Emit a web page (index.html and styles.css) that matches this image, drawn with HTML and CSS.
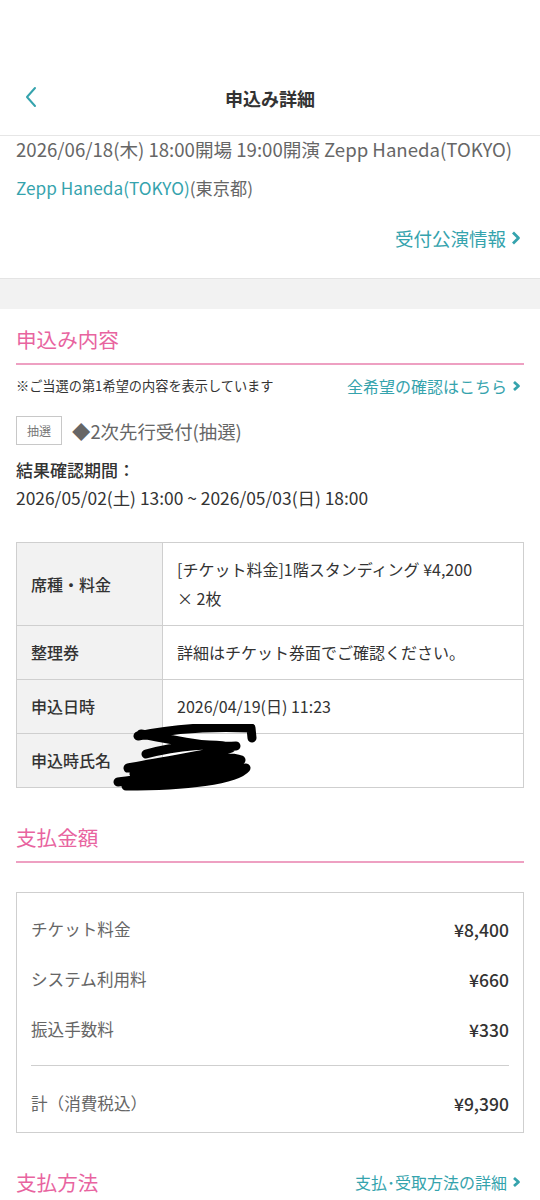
FILE: index.html
```html
<!DOCTYPE html>
<html lang="ja">
<head>
<meta charset="utf-8">
<title>申込み詳細</title>
<link rel="stylesheet" href="styles.css">
</head>
<body>
<div class="page">
  <header class="appbar">
    <span class="back">
      <svg width="14" height="22" viewBox="0 0 14 22"><path d="M11 2 L3 11 L11 20" fill="none" stroke="#35a3ad" stroke-width="2" stroke-linecap="round" stroke-linejoin="round"/></svg>
    </span>
    <h1 class="title">申込み詳細</h1>
  </header>

  <section class="event">
    <p class="event-date">2026/06/18(木) 18:00開場 19:00開演 Zepp Haneda(TOKYO)</p>
    <p class="venue"><span class="teal">Zepp Haneda(TOKYO)</span>(東京都)</p>
    <div class="link-row">
      <a class="link big">受付公演情報<svg class="chev" width="12" height="16" viewBox="0 0 12 16"><path d="M3 2.5 L8.5 8 L3 13.5" fill="none" stroke="#35a3ad" stroke-width="2.8" stroke-linejoin="round"/></svg></a>
    </div>
  </section>

  <div class="band"></div>

  <section class="content">
    <h2 class="sec-title">申込み内容</h2>
    <div class="note-row">
      <span class="note">※ご当選の第1希望の内容を表示しています</span>
      <a class="link small">全希望の確認はこちら<svg class="chev" width="11" height="14" viewBox="0 0 11 14"><path d="M3 3 L7.5 7 L3 11" fill="none" stroke="#35a3ad" stroke-width="2.8" stroke-linejoin="round"/></svg></a>
    </div>
    <div class="kind-row">
      <span class="badge">抽選</span>
      <span class="kind">◆2次先行受付(抽選)</span>
    </div>
    <p class="period-label">結果確認期間：</p>
    <p class="period">2026/05/02(土) 13:00 ~ 2026/05/03(日) 18:00</p>

    <div class="table-wrap">
      <table class="detail">
        <tr><th>席種・料金</th><td>[チケット料金]1階スタンディング ¥4,200<br>× 2枚</td></tr>
        <tr><th>整理券</th><td>詳細はチケット券面でご確認ください。</td></tr>
        <tr><th>申込日時</th><td>2026/04/19(日) 11:23</td></tr>
        <tr><th>申込時氏名</th><td></td></tr>
      </table>
      <svg class="scribble" width="160" height="70" viewBox="0 0 160 70">
        <path d="M35 10 C70 16 100 24 130 22 M32 12 C60 6 100 2 145 4 L146 14 M40 30 C70 22 110 18 125 24 C110 30 60 36 22 44 C60 38 120 30 135 36 C120 46 60 52 12 58 C50 54 110 50 140 44 C130 56 80 62 20 62 C60 58 100 56 118 50 M28 50 C60 42 100 38 120 40" fill="none" stroke="#000" stroke-width="9" stroke-linecap="round" stroke-linejoin="round"/>
      </svg>
    </div>

    <h2 class="sec-title gap">支払金額</h2>
    <div class="amount-box">
      <div class="amount-row"><span class="lbl">チケット料金</span><span class="val">¥8,400</span></div>
      <div class="amount-row"><span class="lbl">システム利用料</span><span class="val">¥660</span></div>
      <div class="amount-row"><span class="lbl">振込手数料</span><span class="val">¥330</span></div>
      <div class="divider"></div>
      <div class="amount-row"><span class="lbl">計（消費税込）</span><span class="val">¥9,390</span></div>
    </div>

    <div class="pay-head">
      <h2 class="pay-title">支払方法</h2>
      <a class="link small">支払･受取方法の詳細<svg class="chev" width="11" height="14" viewBox="0 0 11 14"><path d="M3 3 L7.5 7 L3 11" fill="none" stroke="#35a3ad" stroke-width="2.8" stroke-linejoin="round"/></svg></a>
    </div>
  </section>
</div>
</body>
</html>
```

FILE: styles.css
```css
* { box-sizing: border-box; }
html, body { margin: 0; padding: 0; background: #fff; }
body {
  font-family: "Noto Sans CJK JP", "Noto Sans", sans-serif;
  color: #333;
  width: 540px;
  height: 1200px;
  overflow: hidden;
}
p, h1, h2 { margin: 0; font-weight: normal; }
a { text-decoration: none; }

.appbar {
  margin-top: 60px;
  height: 76px;
  border-bottom: 1px solid #e6e6e6;
  display: flex;
  align-items: center;
  justify-content: center;
  position: relative;
}
.back { position: absolute; left: 24px; top: 26px; display: flex; }
.title { font-size: 18px; font-weight: bold; color: #333; line-height: 24px; }

.event { padding: 0 16px 27px; }
.event-date { font-size: 18.6px; line-height: 26px; color: #666; white-space: nowrap; }
.venue { margin-top: 14px; font-size: 17.2px; line-height: 24px; color: #666; }
.teal { color: #35a3ad; }
.link-row { margin-top: 25px; display: flex; justify-content: flex-end; padding-right: 2px; }
.link { color: #35a3ad; display: inline-flex; align-items: center; }
.link.big { font-size: 18.5px; line-height: 26px; }
.link.small { font-size: 16px; line-height: 20px; }
.chev { margin-left: 4px; }

.band { height: 31px; background: #f2f2f2; border-top: 1px solid #e4e4e4; }

.content { padding: 16px 16px 0; }
.sec-title {
  color: #e8649f;
  font-size: 20.6px;
  line-height: 28px;
  padding-bottom: 10px;
  border-bottom: 2px solid #eea0c2;
}
.sec-title.gap { margin-top: 35px; }

.note-row { margin-top: 11px; display: flex; justify-content: space-between; align-items: center; padding-right: 2px; }
.note { font-size: 13.2px; line-height: 20px; color: #333; }

.kind-row { margin-top: 20px; display: flex; align-items: center; }
.badge {
  width: 46px; height: 29px;
  border: 1px solid #c8c8c8;
  color: #777;
  font-size: 12px;
  display: flex; align-items: center; justify-content: center;
}
.kind { margin-left: 10px; font-size: 18.4px; line-height: 26px; color: #666; }

.period-label { margin-top: 11px; font-size: 17px; line-height: 28px; font-weight: 500; color: #333; }
.period { font-size: 17.4px; line-height: 28px; color: #333; }

.table-wrap { margin-top: 30px; position: relative; }
.detail { width: 100%; border-collapse: collapse; font-size: 16px; }
.detail th, .detail td { border: 1px solid #cfcfcf; padding: 12px 14px; line-height: 29px; text-align: left; vertical-align: middle; }
.detail th { width: 146px; background: #f2f2f2; font-weight: 500; color: #333; }
.detail td { color: #333; }
.scribble { position: absolute; left: 90px; top: 182px; }

.amount-box {
  margin-top: 29px;
  border: 1px solid #cfcfcf;
  padding: 11px 14px 4px;
}
.amount-row { height: 50px; display: flex; justify-content: space-between; align-items: center; }
.lbl { font-size: 16.6px; color: #666; }
.val { font-size: 17.5px; font-weight: 500; color: #333; }
.divider { margin: 11px 0 12px; border-top: 1px solid #cfcfcf; }

.pay-head { margin-top: 35px; display: flex; justify-content: space-between; align-items: center; padding-right: 2px; }
.pay-title { color: #e8649f; font-size: 20.6px; line-height: 28px; }
```
